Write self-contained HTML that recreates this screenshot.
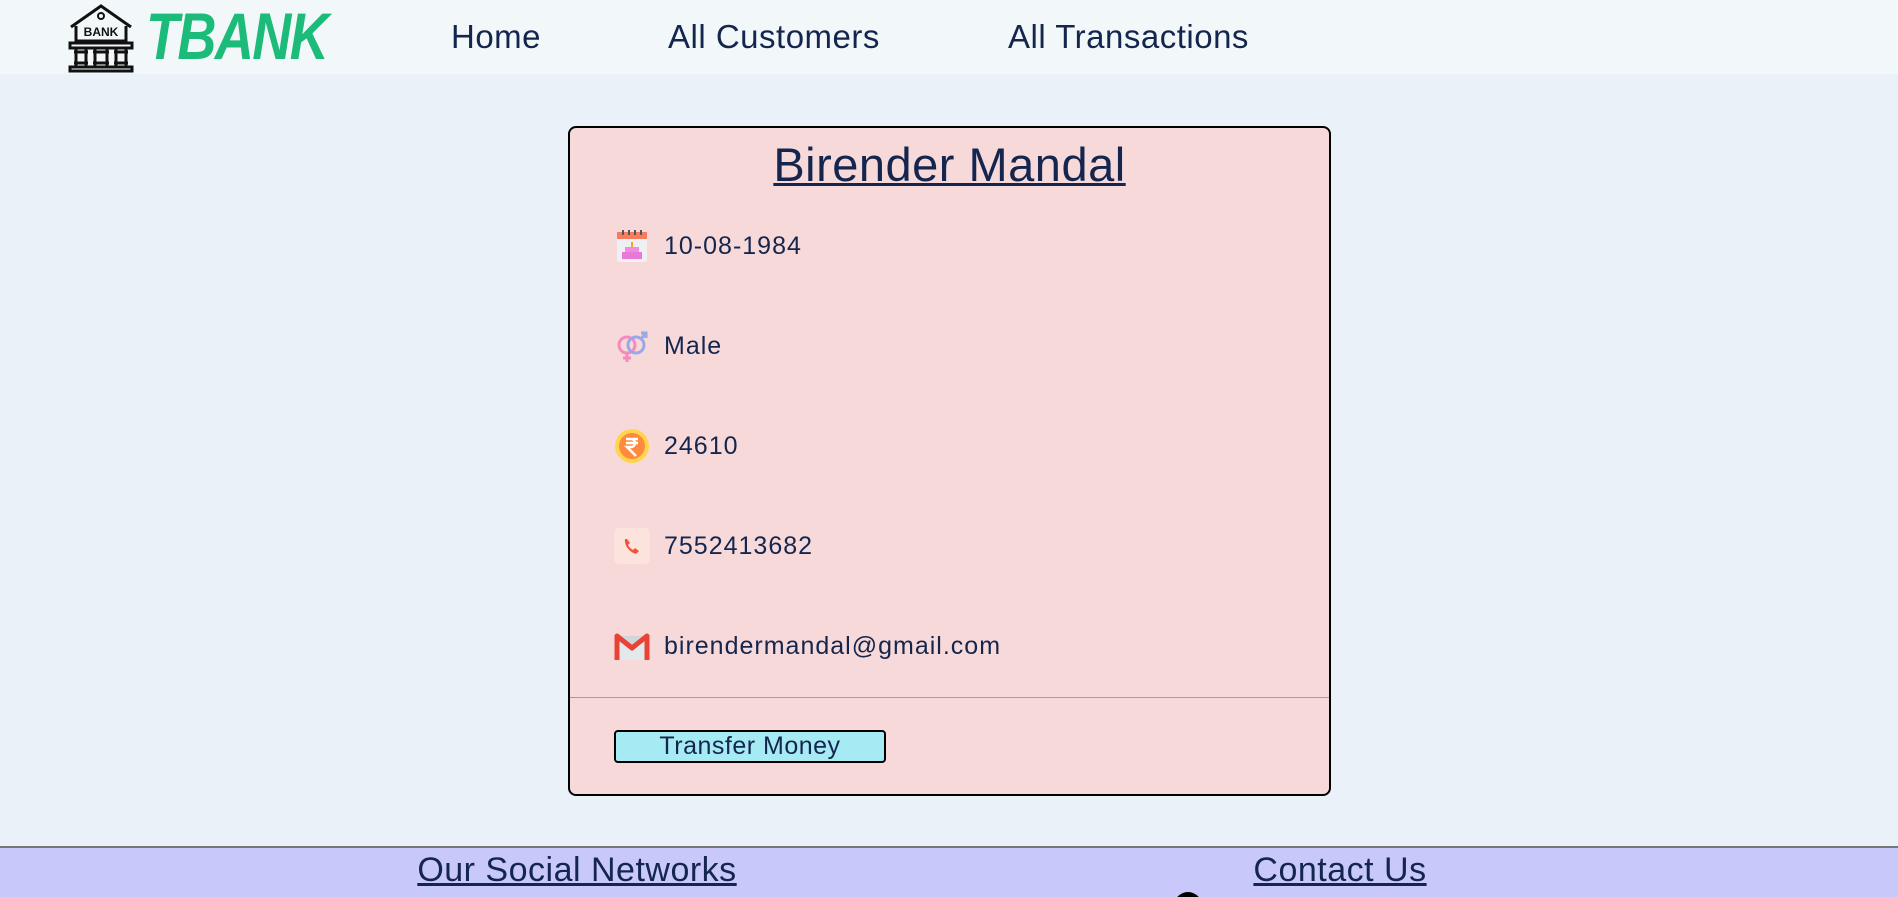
<!DOCTYPE html>
<html><head><meta charset="utf-8"><style>
*{margin:0;padding:0;box-sizing:border-box}
html,body{width:1898px;height:897px;overflow:hidden}
body{background:#eaf1f9;font-family:"Liberation Sans",sans-serif;color:#14264e;position:relative}
.hdr{position:absolute;left:0;top:0;width:1898px;height:74px;background:#f2f8f9}
.logo{position:absolute;left:66px;top:3px}
.tb{position:absolute;left:146px;top:0px;font-size:66px;font-weight:bold;font-style:italic;color:#1dbb7a;letter-spacing:-2px;transform:scaleX(0.82);transform-origin:left;line-height:72px}
.nav{position:absolute;top:18px;font-size:33px;color:#14264e;letter-spacing:0.5px}
.card{position:absolute;left:568px;top:126px;width:763px;height:670px;background:#f7d9da;border:2px solid #000;border-radius:8px}
.title{position:absolute;left:0;width:100%;top:9px;text-align:center;font-size:47px;text-decoration:underline;text-decoration-thickness:3px;letter-spacing:0.5px}
.row{position:absolute;left:44px;height:36px;display:flex;align-items:center;font-size:25px;letter-spacing:1px}
.row svg{width:36px;height:36px;margin-right:14px}
.hr{position:absolute;left:0;top:569px;width:100%;height:1px;background:#a0a0a0}
.btn{position:absolute;left:44px;top:602px;width:272px;height:33px;background:#a6ebf3;border:2px solid #000;border-radius:4px;font-size:25px;text-align:center;line-height:29px;letter-spacing:0.5px}
.ftr{position:absolute;left:0;top:846px;width:1898px;height:51px;background:#c8c8fa;border-top:2px solid #777;overflow:hidden}
.ft{position:absolute;top:3px;font-size:34px;text-decoration:underline;text-decoration-thickness:3px;transform:translateX(-50%);white-space:nowrap;letter-spacing:0.5px}
</style></head><body>
<div class="hdr">
<svg class="logo" width="70" height="70" viewBox="0 0 70 70" fill="none" stroke="#111" stroke-width="3">
<path d="M5 24 L35 3 L65 24 M10 23 V38 H60 V23"/><circle cx="35" cy="13" r="3" stroke-width="2"/>
<text x="35" y="33" font-size="12" font-weight="bold" fill="#111" stroke="none" text-anchor="middle" font-family="Liberation Sans">BANK</text>
<rect x="4" y="40" width="62" height="5"/><path d="M10 45V64M20 45V64M29 45V64M41 45V64M50 45V64M60 45V64M8 49H22M27 49H43M48 49H62M8 60H22M27 60H43M48 60H62"/>
<rect x="4" y="64" width="62" height="4"/></svg>
<div class="tb">TBANK</div>
<div class="nav" style="left:451px">Home</div>
<div class="nav" style="left:668px">All Customers</div>
<div class="nav" style="left:1008px">All Transactions</div>
</div>
<div class="card">
<div class="title">Birender Mandal</div>
<div class="row" style="top:100px"><svg viewBox="0 0 36 36"><rect x="3" y="4" width="30" height="30" rx="2" fill="#eef0f4"/><rect x="3" y="4" width="30" height="7" fill="#f77c5c"/><path d="M9 2v5M15 2v5M21 2v5M27 2v5" stroke="#555" stroke-width="2"/><rect x="11" y="19" width="14" height="5" fill="#f08be0"/><rect x="8" y="24" width="20" height="7" fill="#e77ad6"/><path d="M18 14v5" stroke="#f5a623" stroke-width="2"/></svg>10-08-1984</div>
<div class="row" style="top:200px"><svg viewBox="0 0 36 36" fill="none" stroke-width="3"><circle cx="13" cy="17" r="8" stroke="#f58bbb"/><path d="M13 25v9M9 30h8" stroke="#f58bbb"/><circle cx="22" cy="17" r="8" stroke="#9aa8ea"/><path d="M27 11l5-6M27 5h5v5" stroke="#9aa8ea"/></svg>Male</div>
<div class="row" style="top:300px"><svg viewBox="0 0 36 36"><circle cx="18" cy="18" r="17" fill="#ffd54f"/><circle cx="18" cy="18" r="13" fill="#ff8a3d"/><path d="M12 11h12M12 15h12M13 11h4a4 4 0 010 8h-4l9 9" stroke="#fff" stroke-width="2.5" fill="none"/></svg>24610</div>
<div class="row" style="top:400px"><svg viewBox="0 0 36 36"><rect x="0" y="0" width="36" height="36" rx="5" fill="#fde3de"/><path d="M11 11c-1 6 4 13 11 15l3-3-4-3-2 2c-2-1-4-3-5-5l2-2-3-4z" fill="#f4533a"/></svg>7552413682</div>
<div class="row" style="top:500px"><svg viewBox="0 0 36 36"><path d="M3 8h30v24H3z" fill="#e3e8ec"/><path d="M3 8L18 20L33 8" fill="#d0d6db"/><path d="M3 32V8l15 12L33 8v24" stroke="#ea4335" stroke-width="5" fill="none" stroke-linejoin="round"/></svg>birendermandal@gmail.com</div>
<div class="hr"></div>
<div class="btn">Transfer Money</div>
</div>
<div class="ftr">
<div class="ft" style="left:577px">Our Social Networks</div>
<div class="ft" style="left:1340px">Contact Us</div>
<div style="position:absolute;left:1174px;top:44px;width:28px;height:28px;border-radius:50%;background:#000"></div>
</div>
</body></html>
